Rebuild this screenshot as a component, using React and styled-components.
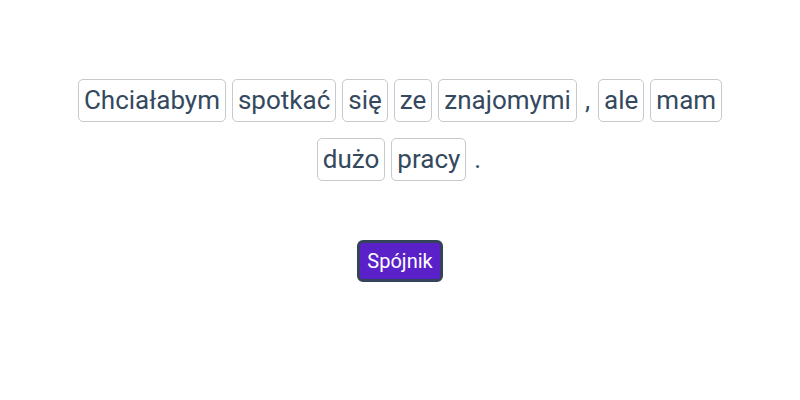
import React from "react";
import styled, { createGlobalStyle } from "styled-components";

const GlobalStyle = createGlobalStyle`
  body {
    margin: 0;
    background: #fff;
    font-family: Roboto, "Noto Sans", sans-serif;
  }
`;

const Page = styled.div`
  display: flex;
  flex-direction: column;
  align-items: center;
  padding-top: 79px;
`;

const Sentence = styled.div`
  width: 680px;
  display: flex;
  flex-wrap: wrap;
  justify-content: center;
  column-gap: 6px;
  row-gap: 16px;
`;

const Word = styled.span`
  display: inline-block;
  font-size: 26px;
  line-height: 29px;
  color: #34495e;
  padding: ${(p) => (p.$punct ? "6px 1px" : "6px 5px")};
  border: 1px solid ${(p) => (p.$punct ? "transparent" : "#c6c9ce")};
  border-radius: 5px;
`;

const Button = styled.button`
  margin-top: 59px;
  height: 42px;
  padding: 0 7px;
  font-family: Roboto, "Noto Sans", sans-serif;
  font-size: 20px;
  color: #fff;
  background: #5b21c9;
  border: 3px solid #34425a;
  border-radius: 6px;
`;

const words = [
  "Chciałabym", "spotkać", "się", "ze", "znajomymi", ",", "ale", "mam",
  "dużo", "pracy", ".",
];

export default function App() {
  return (
    <>
      <GlobalStyle />
      <Page>
        <Sentence>
          {words.map((w, i) => (
            <Word key={i} $punct={w === "," || w === "."}>{w}</Word>
          ))}
        </Sentence>
        <Button type="button">Spójnik</Button>
      </Page>
    </>
  );
}
